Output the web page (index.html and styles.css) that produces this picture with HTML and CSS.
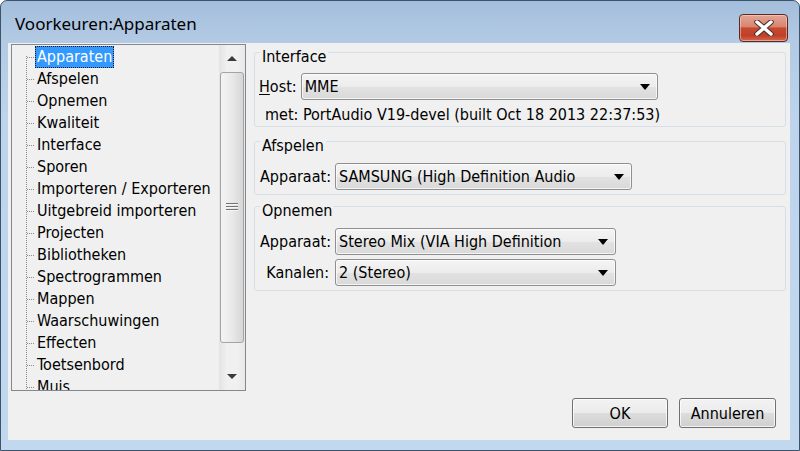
FILE: index.html
```html
<!DOCTYPE html>
<html lang="nl">
<head>
    <meta charset="UTF-8">
    <title>Voorkeuren:Apparaten</title>
    <link rel="stylesheet" href="styles.css">
</head>
<body>
    <div class="window">
        <!-- Title bar -->
        <div class="titlebar">
            <span class="title">Voorkeuren:Apparaten</span>
            <button class="close-btn" aria-label="Sluiten">
                <svg width="20" height="16" viewBox="0 0 20 16">
                    <path d="M3 2 L17 14 M17 2 L3 14" stroke="#4a2e2a" stroke-width="5.5" stroke-linecap="round"/>
                    <path d="M3 2 L17 14 M17 2 L3 14" stroke="#ffffff" stroke-width="3.5" stroke-linecap="round"/>
                </svg>
            </button>
        </div>

        <div class="client">
            <div class="main">
                <!-- Category tree -->
                <div class="tree">
                    <ul class="tree-list">
                        <li class="selected"><span>Apparaten</span></li>
                        <li><span>Afspelen</span></li>
                        <li><span>Opnemen</span></li>
                        <li><span>Kwaliteit</span></li>
                        <li><span>Interface</span></li>
                        <li><span>Sporen</span></li>
                        <li><span>Importeren / Exporteren</span></li>
                        <li><span>Uitgebreid importeren</span></li>
                        <li><span>Projecten</span></li>
                        <li><span>Bibliotheken</span></li>
                        <li><span>Spectrogrammen</span></li>
                        <li><span>Mappen</span></li>
                        <li><span>Waarschuwingen</span></li>
                        <li><span>Effecten</span></li>
                        <li><span>Toetsenbord</span></li>
                        <li><span>Muis</span></li>
                    </ul>
                    <div class="vscroll">
                        <div class="scroll-arrow"><span class="tri-up"></span></div>
                        <div class="scroll-thumb"><span class="grip"></span></div>
                        <div class="scroll-track"></div>
                        <div class="scroll-arrow"><span class="tri-down"></span></div>
                    </div>
                </div>

                <!-- Settings panel -->
                <div class="panel">
                    <div class="group group-interface">
                        <span class="group-label">Interface</span>
                        <div class="host-row">
                            <span class="field-label"><u>H</u>ost:</span>
                            <div class="combo combo-host"><span>MME</span><i class="combo-arrow"></i></div>
                        </div>
                        <div class="info-line">met: PortAudio V19-devel (built Oct 18 2013 22:37:53)</div>
                    </div>

                    <div class="group group-play">
                        <span class="group-label">Afspelen</span>
                        <div class="form-row">
                            <span class="field-label">Apparaat:</span>
                            <div class="combo combo-play"><span>SAMSUNG (High Definition Audio</span><i class="combo-arrow"></i></div>
                        </div>
                    </div>

                    <div class="group group-record">
                        <span class="group-label">Opnemen</span>
                        <div class="form-row">
                            <span class="field-label">Apparaat:</span>
                            <div class="combo combo-rec"><span>Stereo Mix (VIA High Definition</span><i class="combo-arrow"></i></div>
                        </div>
                        <div class="form-row second">
                            <span class="field-label">Kanalen:</span>
                            <div class="combo combo-rec"><span>2 (Stereo)</span><i class="combo-arrow"></i></div>
                        </div>
                    </div>
                </div>
            </div>

            <div class="buttons">
                <button class="btn">OK</button>
                <button class="btn">Annuleren</button>
            </div>
        </div>
    </div>
</body>
</html>
```

FILE: styles.css
```css
:root {
    --dialog-bg: #f0f0f0;
    --group-border: #d5dfe5;
    --control-border: #8e8f8f;
    --select-blue: #3399ff;
    --text: #000000;
}

html, body {
    margin: 0;
    padding: 0;
    background: #ffffff;
}

body {
    font-family: "DejaVu Sans Condensed", "DejaVu Sans", sans-serif;
    font-size: 16px;
    line-height: 18px;
    color: var(--text);
}

/* Window frame */
.window {
    width: 800px;
    height: 451px;
    box-sizing: border-box;
    border: 1px solid #3d526b;
    border-radius: 7px 7px 0 0;
    padding: 0 9px 10px 7px;
    background: linear-gradient(to bottom, #a3bedb 0, #b3cae4 40px, #bdd4ec 120px, #c1d8ef 100%);
    display: flex;
    flex-direction: column;
}

.titlebar {
    height: 42px;
    flex: none;
    display: flex;
    align-items: center;
    justify-content: space-between;
    padding-left: 7px;
}

.title {
    font-family: "Noto Sans", "Open Sans", sans-serif;
    font-size: 17px;
    color: #000;
    margin-top: 3px;
}

.close-btn {
    width: 49px;
    height: 28px;
    margin-top: 12px;
    margin-right: 2px;
    padding: 0;
    border: 1px solid #5a2a22;
    border-radius: 4px;
    background: linear-gradient(to bottom, #e3a594 0, #d88570 45%, #c64a30 50%, #c04027 80%, #d06a50 100%);
    box-shadow: inset 0 0 0 1px rgba(255, 220, 210, 0.5);
    display: flex;
    align-items: center;
    justify-content: center;
}

/* Client area */
.client {
    flex: 1;
    background: var(--dialog-bg);
    display: flex;
    flex-direction: column;
}

.main {
    display: flex;
    padding: 1px 4px 0 3px;
}

/* Tree */
.tree {
    width: 235px;
    height: 347px;
    box-sizing: border-box;
    border: 1px solid #828790;
    background: var(--dialog-bg);
    display: flex;
    overflow: hidden;
    flex: none;
}

.tree-list {
    flex: 1;
    list-style: none;
    margin: 0;
    padding: 1px 0 0 0;
    background-image: repeating-linear-gradient(to bottom, #8a8a8a 0 1px, transparent 1px 2px);
    background-size: 1px 100%;
    background-position: 14px 11px;
    background-repeat: no-repeat;
}

.tree-list li {
    height: 22px;
    line-height: 22px;
    padding-left: 23px;
    white-space: nowrap;
    background-image: repeating-linear-gradient(to right, #8a8a8a 0 1px, transparent 1px 2px);
    background-size: 8px 1px;
    background-position: 15px 11px;
    background-repeat: no-repeat;
}

.tree-list li span {
    display: inline-block;
    padding: 0 1px;
    line-height: 20px;
    border: 1px solid transparent;
}

.tree-list li.selected span {
    background: var(--select-blue);
    color: #fff;
    border: 1px dotted #1a1a1a;
}

/* Scrollbar */
.vscroll {
    width: 26px;
    flex: none;
    display: flex;
    flex-direction: column;
    background: linear-gradient(to right, #e3e3e3, #f0f0f0 30%, #f0f0f0 70%, #e8e8e8);
}

.scroll-arrow {
    height: 27px;
    flex: none;
    display: flex;
    align-items: center;
    justify-content: center;
}

.tri-up {
    width: 0;
    height: 0;
    border-left: 5px solid transparent;
    border-right: 5px solid transparent;
    border-bottom: 5px solid #3a3a3a;
}

.tri-down {
    width: 0;
    height: 0;
    border-left: 5px solid transparent;
    border-right: 5px solid transparent;
    border-top: 5px solid #3a3a3a;
}

.scroll-thumb {
    height: 271px;
    flex: none;
    margin: 0 1px;
    box-sizing: border-box;
    border: 1px solid #a4a4a4;
    border-radius: 3px;
    background: linear-gradient(to right, #f4f4f4 0, #e9e9e9 50%, #d6d6d6 100%);
    display: flex;
    align-items: center;
    justify-content: center;
}

.grip {
    width: 12px;
    height: 9px;
    background: repeating-linear-gradient(to bottom, #747474 0 1px, #f6f6f6 1px 2px, transparent 2px 3px);
}

.scroll-track {
    flex: 1;
}

/* Right panel */
.panel {
    flex: 1;
    margin-left: 8px;
}

.group {
    border: 1px solid var(--group-border);
    border-radius: 3px;
    padding: 0 0 4px 0;
}

.group-interface {
    margin-top: 8px;
    padding-bottom: 2px;
}

.group-play {
    margin-top: 14px;
}

.group-record {
    margin-top: 11px;
}

.group-label {
    display: block;
    width: fit-content;
    margin: -5px 0 0 5px;
    padding: 0 2px;
    height: 18px;
    line-height: 18px;
    background: var(--dialog-bg);
}

.host-row {
    display: flex;
    align-items: center;
    gap: 4px;
    margin-top: 7px;
    padding-left: 4px;
}

.info-line {
    margin-top: 6px;
    height: 18px;
    padding-left: 10px;
    white-space: nowrap;
}

.form-row {
    display: grid;
    grid-template-columns: 69px auto;
    column-gap: 6px;
    align-items: center;
    justify-content: start;
    margin-top: 8px;
    padding-left: 5px;
}

.form-row.second {
    margin-top: 4px;
}

.field-label {
    text-align: right;
    white-space: nowrap;
}

.host-row .field-label u {
    text-decoration-thickness: 1px;
    text-underline-offset: 2px;
}

/* Combo boxes */
.combo {
    height: 27px;
    box-sizing: border-box;
    border: 1px solid var(--control-border);
    border-radius: 3px;
    background: linear-gradient(to bottom, #f4f4f4 0, #ececec 50%, #e2e2e2 51%, #d9d9d9 100%);
    box-shadow: inset 0 0 0 1px rgba(255, 255, 255, 0.7);
    display: flex;
    align-items: center;
    justify-content: space-between;
    padding: 0 7px 0 3px;
    white-space: nowrap;
}

.combo-host {
    width: 357px;
}

.combo-play {
    width: 297px;
}

.combo-rec {
    width: 281px;
}

.combo-arrow {
    width: 0;
    height: 0;
    border-left: 5px solid transparent;
    border-right: 5px solid transparent;
    border-top: 6px solid #000;
}

/* Dialog buttons */
.buttons {
    display: flex;
    justify-content: flex-end;
    gap: 11px;
    margin-top: 7px;
    padding-right: 14px;
}

.btn {
    height: 30px;
    width: 96px;
    font-family: inherit;
    font-size: 16px;
    color: #000;
    border: 1px solid #707070;
    border-radius: 3px;
    background: linear-gradient(to bottom, #f2f2f2 0, #ebebeb 50%, #dddddd 51%, #cfcfcf 100%);
    box-shadow: inset 0 0 0 1px rgba(255, 255, 255, 0.75);
    padding: 0;
}

.btn + .btn {
    width: 97px;
}
```
